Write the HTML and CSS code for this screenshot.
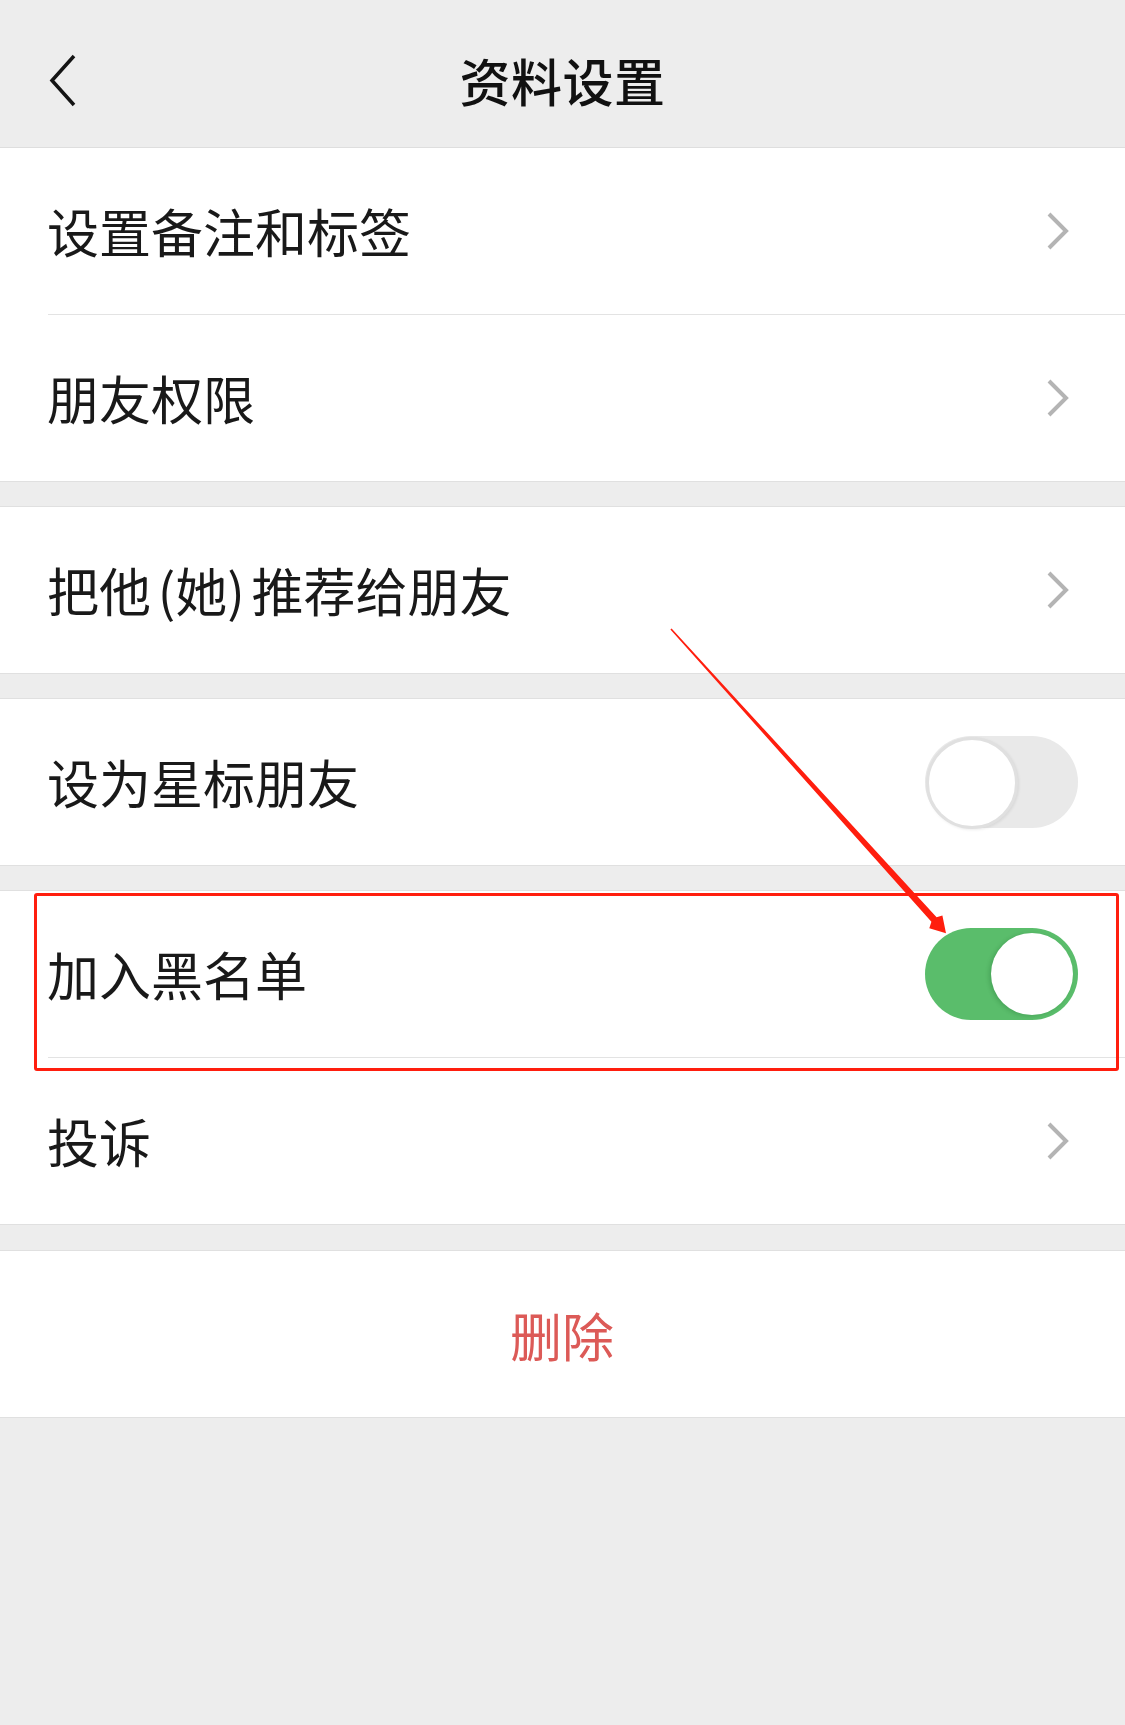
FILE: index.html
```html
<!DOCTYPE html>
<html lang="zh-CN">
<head>
    <meta charset="UTF-8">
    <meta name="viewport" content="width=device-width, initial-scale=1.0">
    <title>资料设置</title>
    <link rel="stylesheet" href="styles.css">
</head>
<body>
    <div class="page">
        <header class="nav-bar">
            <a class="nav-back" href="#">
                <svg width="32" height="54" viewBox="0 0 32 54">
                    <polyline points="28,3 6,27.5 28,52" fill="none" stroke="#141414" stroke-width="3.5"/>
                </svg>
            </a>
            <h1 class="nav-title">资料设置</h1>
            <span></span>
        </header>

        <section class="group">
            <div class="cell">
                <span class="cell-label">设置备注和标签</span>
                <svg class="chevron" width="24" height="40" viewBox="0 0 24 40">
                    <polyline points="3,3 20,20 3,37" fill="none" stroke="#b4b4b4" stroke-width="4"/>
                </svg>
            </div>
            <div class="cell">
                <span class="cell-label">朋友权限</span>
                <svg class="chevron" width="24" height="40" viewBox="0 0 24 40">
                    <polyline points="3,3 20,20 3,37" fill="none" stroke="#b4b4b4" stroke-width="4"/>
                </svg>
            </div>
        </section>

        <section class="group">
            <div class="cell">
                <span class="cell-label cell-label-tight">把他 (她) 推荐给朋友</span>
                <svg class="chevron" width="24" height="40" viewBox="0 0 24 40">
                    <polyline points="3,3 20,20 3,37" fill="none" stroke="#b4b4b4" stroke-width="4"/>
                </svg>
            </div>
        </section>

        <section class="group">
            <div class="cell">
                <span class="cell-label">设为星标朋友</span>
                <span class="switch"><span class="switch-knob"></span></span>
            </div>
        </section>

        <section class="group">
            <div class="cell">
                <span class="cell-label">加入黑名单</span>
                <span class="switch on"><span class="switch-knob"></span></span>
            </div>
            <div class="cell">
                <span class="cell-label">投诉</span>
                <svg class="chevron" width="24" height="40" viewBox="0 0 24 40">
                    <polyline points="3,3 20,20 3,37" fill="none" stroke="#b4b4b4" stroke-width="4"/>
                </svg>
            </div>
        </section>

        <section class="group">
            <div class="cell cell-danger">删除</div>
        </section>

        <!-- marca roja sobre la fila de la lista negra -->
        <div class="mark-box"></div>
        <svg class="mark-arrow" width="1125" height="1725" viewBox="0 0 1125 1725">
            <polygon fill="#ff1e0e" points="670.4,629.5 931.4,921.8 929.3,928.3 946,933.3 942.4,915.5 936.6,917.2 671.6,628.5"/>
        </svg>
    </div>
</body>
</html>
```

FILE: styles.css
```css
body {
    margin: 0;
    background-color: #ededed;
    font-family: "Noto Sans CJK SC", "Noto Sans", sans-serif;
    color: #191919;
}
.page {
    position: relative;
    width: 1125px;
    min-height: 1725px;
}
.nav-bar {
    display: grid;
    grid-template-columns: 1fr auto 1fr;
    align-items: center;
    height: 148px;
    box-sizing: border-box;
    padding-top: 12px;
    background-color: #ededed;
    border-bottom: 1px solid #dedede;
}
.nav-back {
    display: flex;
    padding-left: 46px;
}
.nav-title {
    margin: 0;
    font-size: 51px;
    font-weight: 500;
    color: #111;
    letter-spacing: 0.5px;
}
.group {
    background-color: white;
    border-top: 1px solid #e0e0e0;
    border-bottom: 1px solid #e0e0e0;
    margin-top: 24px;
}
.nav-bar + .group {
    margin-top: 0;
    border-top: none;
}
.group:last-of-type {
    margin-top: 25px;
}
.cell {
    display: flex;
    align-items: center;
    justify-content: space-between;
    height: 166px;
    padding: 0 48px 0 47px;
    font-size: 52px;
    position: relative;
}
.cell + .cell::before {
    content: "";
    position: absolute;
    top: -1px;
    left: 48px;
    right: 0;
    height: 1px;
    background-color: #e3e3e3;
}
.cell + .cell {
    margin-top: 1px;
}
.cell-label {
    padding-bottom: 2px;
}
.cell-label-tight {
    word-spacing: -5px;
}
.chevron {
    margin-right: 7px;
}
.cell-danger {
    justify-content: center;
    color: #dc5a57;
}
.switch {
    position: relative;
    width: 153px;
    height: 92px;
    border-radius: 46px;
    background-color: #e9e9e9;
    margin-right: -1px;
}
.switch-knob {
    position: absolute;
    top: 1px;
    left: 1px;
    width: 86px;
    height: 86px;
    border-radius: 50%;
    background-color: white;
    border: 3px solid #e0e0e0;
    box-shadow: 1px 1px 3px rgba(0, 0, 0, 0.08);
}
.switch.on {
    background-color: #5abd6b;
}
.switch.on .switch-knob {
    top: 5px;
    left: auto;
    right: 5px;
    width: 82px;
    height: 82px;
    border: none;
    box-shadow: -2px 1px 4px rgba(0, 70, 20, 0.2);
}
.mark-box {
    position: absolute;
    left: 34px;
    top: 893px;
    width: 1085px;
    height: 178px;
    box-sizing: border-box;
    border: 3px solid #ff1e0e;
    border-radius: 3px;
    pointer-events: none;
}
.mark-arrow {
    position: absolute;
    left: 0;
    top: 0;
    pointer-events: none;
}
```
